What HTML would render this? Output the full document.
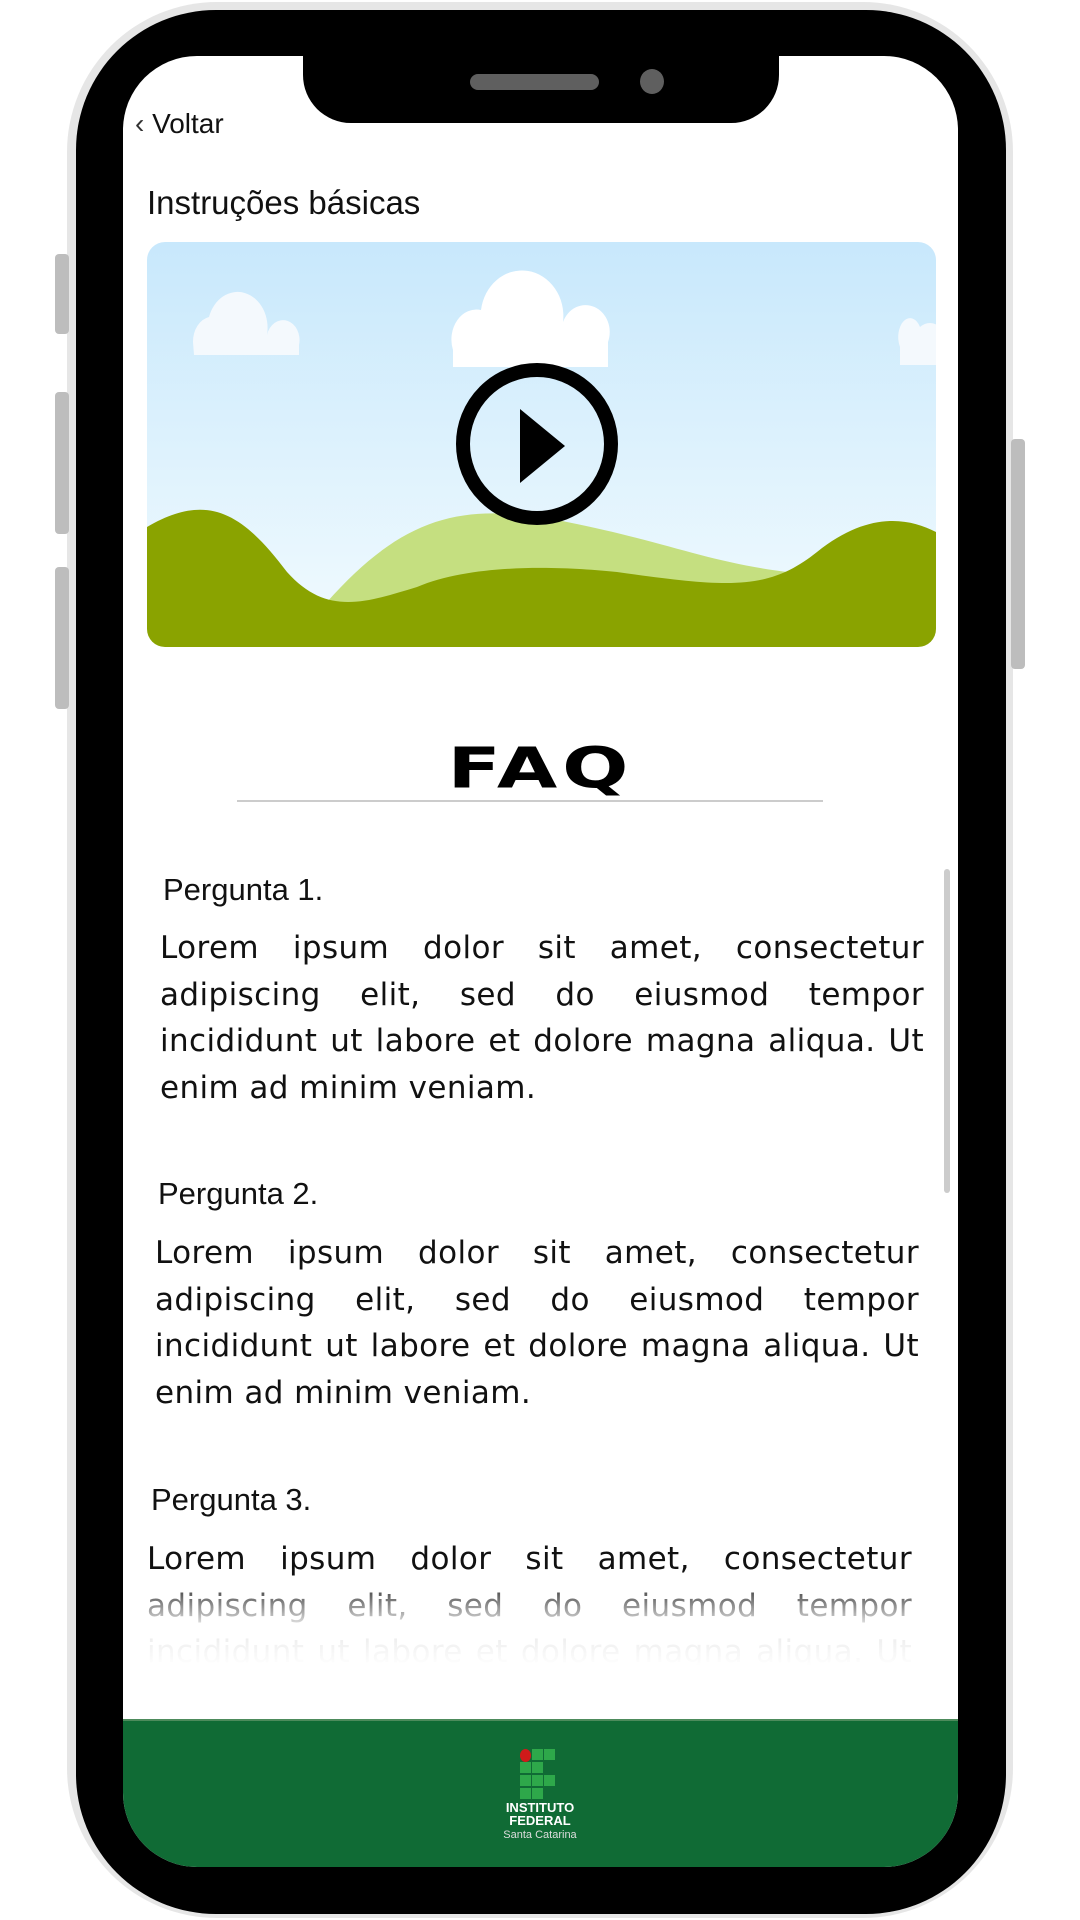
<!DOCTYPE html>
<html><head><meta charset="utf-8"><style>
*{margin:0;padding:0;box-sizing:border-box}
body{width:1080px;height:1920px;background:#fff;position:relative;overflow:hidden;font-family:"Liberation Sans","DejaVu Sans",sans-serif}
.abs{position:absolute}
.outer{left:67px;top:2px;width:946px;height:1916px;border-radius:150px;background:#e6e6e6}
.btn{background:#bdbdbd;border-radius:4px}
.body{left:76px;top:10px;width:930px;height:1904px;border-radius:140px;background:#000}
.screen{left:123px;top:56px;width:835px;height:1811px;border-radius:74px;background:#fff;overflow:hidden}
.notch{left:303px;top:50px;width:476px;height:73px;background:#000;border-radius:0 0 48px 48px}
.t{color:#111;white-space:nowrap}
.p{font-size:31px;color:#111}
.b{font-size:31px;line-height:46.6px;text-align:justify;color:#111;font-family:"DejaVu Sans","Liberation Sans",sans-serif;letter-spacing:0.4px}
</style></head><body>
<div class="abs outer"></div>
<div class="abs btn" style="left:55px;top:254px;width:14px;height:80px"></div>
<div class="abs btn" style="left:55px;top:392px;width:14px;height:142px"></div>
<div class="abs btn" style="left:55px;top:567px;width:14px;height:142px"></div>
<div class="abs btn" style="left:1011px;top:439px;width:14px;height:230px"></div>
<div class="abs body"></div>
<div class="abs screen">
  <div class="abs t" style="left:12px;top:52px;font-size:28px"><span style="font-size:28px;color:#333">&#8249;</span>&nbsp;Voltar</div>
  <div class="abs t" style="left:24px;top:128px;font-size:33px">Instruções básicas</div>
  <svg class="abs" style="left:24px;top:186px" width="789" height="405" viewBox="0 0 789 405">
    <defs><linearGradient id="sky" x1="0" y1="0" x2="0" y2="1"><stop offset="0" stop-color="#c8e8fc"/><stop offset="1" stop-color="#f2fbfe"/></linearGradient>
    <clipPath id="c"><rect width="789" height="405" rx="18"/></clipPath></defs>
    <g clip-path="url(#c)">
      <rect width="789" height="405" fill="url(#sky)"/>
      <path d="M46 100 a20 25 0 0 1 16-25 a30 36 0 0 1 58 18 a10 12 0 0 1 32 10 l0 10 l-105 0z" fill="#f4f9fd"/>
      <path d="M306 108 a25 30 0 0 1 28-40 a40 44 0 0 1 82 12 a18 20 0 0 1 45 20 l0 25 l-155 0z" fill="#fff"/>
      <path d="M753 105 a10 16 0 0 1 20-20 a20 30 0 0 1 20 0 l0 38 l-40 0z" fill="#f4f9fd"/>
      <path d="M180 360 C260 270 320 260 420 280 C520 300 560 320 640 330 L640 405 L180 405Z" fill="#c5df80"/>
      <path d="M0 285 C60 250 95 270 140 330 C180 375 220 360 270 345 C330 320 420 325 470 330 C580 345 620 350 670 310 C720 270 760 275 789 290 L789 405 L0 405Z" fill="#8aa300"/>
      <circle cx="390" cy="202" r="74" fill="none" stroke="#000" stroke-width="14"/>
      <path d="M373 167 L418 204 L373 241Z" fill="#000"/>
    </g>
  </svg>
  <div class="abs" style="left:0;top:668px;width:835px;text-align:center;font-size:78px;font-weight:900;letter-spacing:5px;color:#000;font-family:'DejaVu Sans',sans-serif;transform:scaleY(0.72)">FAQ</div>
  <div class="abs" style="left:114px;top:744px;width:586px;height:2px;background:#ccc"></div>
  <div class="abs" style="left:821px;top:813px;width:6px;height:324px;background:#ccc;border-radius:3px"></div>
  <div class="abs p" style="left:40px;top:816px">Pergunta 1.</div>
  <div class="abs b" style="left:37px;top:869px;width:764px">Lorem ipsum dolor sit amet, consectetur adipiscing elit, sed do eiusmod tempor incididunt ut labore et dolore magna aliqua. Ut enim ad minim veniam.</div>
  <div class="abs p" style="left:35px;top:1120px">Pergunta 2.</div>
  <div class="abs b" style="left:32px;top:1174px;width:764px">Lorem ipsum dolor sit amet, consectetur adipiscing elit, sed do eiusmod tempor incididunt ut labore et dolore magna aliqua. Ut enim ad minim veniam.</div>
  <div class="abs p" style="left:28px;top:1426px">Pergunta 3.</div>
  <div class="abs b" style="left:24px;top:1480px;width:765px;height:160px;overflow:hidden;-webkit-mask-image:linear-gradient(#000 0,#000 40px,rgba(0,0,0,.1) 90px,transparent 130px)">Lorem ipsum dolor sit amet, consectetur adipiscing elit, sed do eiusmod tempor incididunt ut labore et dolore magna aliqua. Ut enim ad minim veniam.</div>
  <div class="abs" style="left:0;top:1663px;width:835px;height:148px;background:#106b35;border-top:2px solid #4d8b5c"></div>
  <div class="abs" style="left:397px;top:1693px">
    <div class="abs" style="left:0;top:0;width:11px;height:13px;border-radius:50%;background:#d01a1a"></div>
    <div class="abs" style="left:12px;top:0;width:11px;height:11px;background:#2ea84a"></div>
    <div class="abs" style="left:24px;top:0;width:11px;height:11px;background:#2ea84a"></div>
    <div class="abs" style="left:0;top:13px;width:11px;height:11px;background:#2ea84a"></div>
    <div class="abs" style="left:12px;top:13px;width:11px;height:11px;background:#2ea84a"></div>
    <div class="abs" style="left:0;top:26px;width:11px;height:11px;background:#2ea84a"></div>
    <div class="abs" style="left:12px;top:26px;width:11px;height:11px;background:#2ea84a"></div>
    <div class="abs" style="left:24px;top:26px;width:11px;height:11px;background:#2ea84a"></div>
    <div class="abs" style="left:0;top:39px;width:11px;height:11px;background:#2ea84a"></div>
    <div class="abs" style="left:12px;top:39px;width:11px;height:11px;background:#2ea84a"></div>
  </div>
  <div class="abs" style="left:367px;top:1745px;width:100px;text-align:center;color:#fff;font-size:13px;font-weight:bold;line-height:13px">INSTITUTO<br>FEDERAL<br><span style="font-weight:normal;font-size:11px;color:#ddd">Santa Catarina</span></div>
</div>
<div class="abs notch"></div>
<div class="abs" style="left:470px;top:74px;width:129px;height:16px;border-radius:8px;background:#5f5f5f"></div>
<div class="abs" style="left:640px;top:69px;width:24px;height:25px;border-radius:50%;background:#5f5f5f"></div>
</body></html>
